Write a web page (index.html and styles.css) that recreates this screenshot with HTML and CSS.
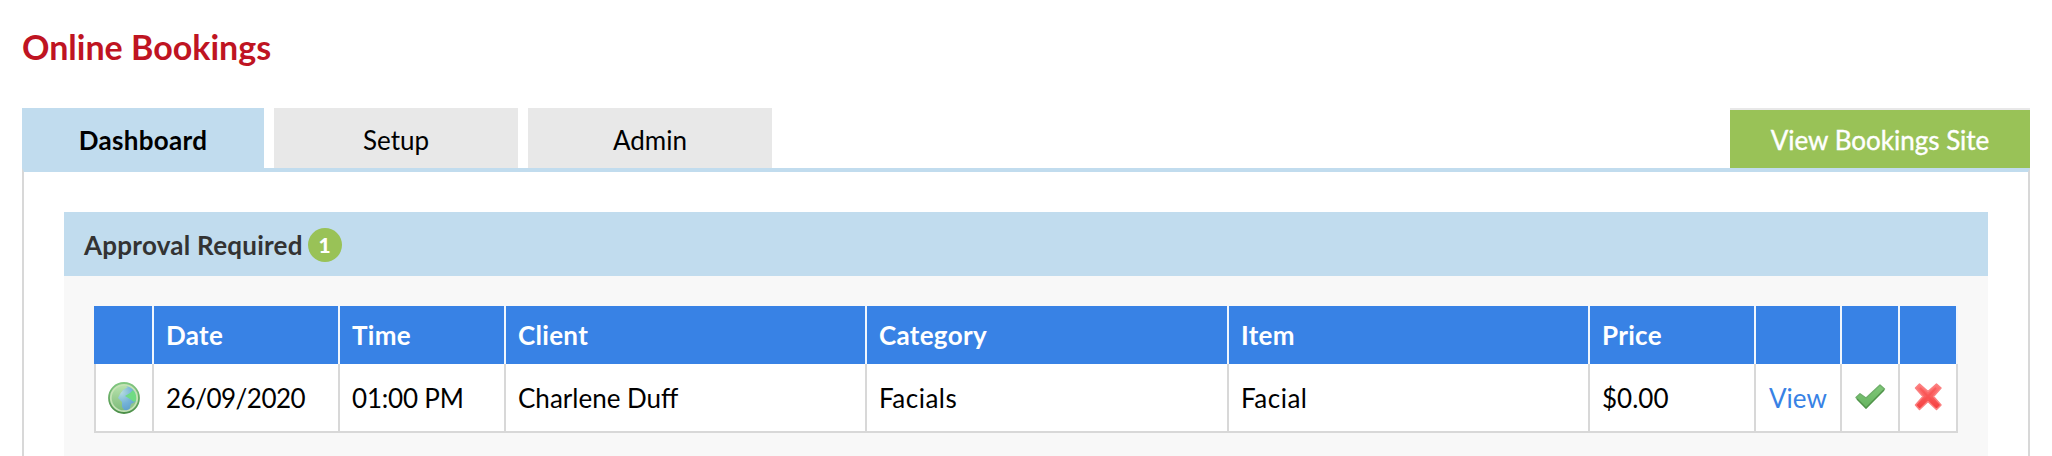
FILE: index.html
```html
<!DOCTYPE html>
<html lang="en">
<head>
  <meta charset="UTF-8">
  <title>Online Bookings</title>
  <link rel="stylesheet" href="styles.css">
</head>
<body>

  <h1>Online Bookings</h1>

  <!-- Tabs -->
  <nav class="tabs">
    <a href="#" class="tab active">Dashboard</a>
    <a href="#" class="tab">Setup</a>
    <a href="#" class="tab">Admin</a>
    <a href="#" class="site-button">View Bookings Site</a>
  </nav>

  <div class="panel">
    <section class="section">
      <h2>Approval Required <span class="badge">1</span></h2>

      <!-- Bookings waiting for approval -->
      <table>
        <colgroup>
          <col class="col-source">
          <col class="col-date">
          <col class="col-time">
          <col class="col-client">
          <col class="col-category">
          <col class="col-item">
          <col class="col-price">
          <col class="col-view">
          <col class="col-icon">
          <col class="col-icon">
        </colgroup>
        <thead>
          <tr>
            <th></th><th>Date</th><th>Time</th><th>Client</th><th>Category</th><th>Item</th><th>Price</th><th></th><th></th><th></th>
          </tr>
        </thead>
        <tbody>
          <tr>
            <td class="icon">
              <svg width="32" height="32" viewBox="0 0 32 32">
                <defs>
                  <radialGradient id="sea" cx="0.4" cy="0.3" r="0.75">
                    <stop offset="0" stop-color="#b5dcdf"/>
                    <stop offset="0.55" stop-color="#74b2d8"/>
                    <stop offset="1" stop-color="#5a9cc8"/>
                  </radialGradient>
                  <linearGradient id="land" x1="0" y1="0" x2="0" y2="1">
                    <stop offset="0" stop-color="#b8e3ae"/>
                    <stop offset="1" stop-color="#7dba78"/>
                  </linearGradient>
                  <linearGradient id="rim" x1="0" y1="0" x2="0" y2="1">
                    <stop offset="0" stop-color="#82c880"/>
                    <stop offset="1" stop-color="#4c8f48"/>
                  </linearGradient>
                </defs>
                <circle cx="16" cy="16" r="14" fill="url(#sea)"/>
                <path d="M4 11 Q7 3 16 3 L20 5 L15 8 L12 12 L10 16 L14 20 L14 25 L17 29 Q5 28 3 17 Z" fill="url(#land)"/>
                <path d="M17 14 L22 11 L25 8 L29 13 L29 18 L26 20 L22 17 Z" fill="#6fdb83"/>
                <path d="M23 22 L29 19 Q27 26 21 29 Z" fill="#8fc58b"/>
                <circle cx="16" cy="16" r="13.3" fill="none" stroke="#c5e3b4" stroke-width="2"/>
                <circle cx="16" cy="16" r="15" fill="none" stroke="url(#rim)" stroke-width="1.8"/>
              </svg>
            </td>
            <td class="date">26/09/2020</td>
            <td class="time">01:00 PM</td>
            <td>Charlene Duff</td>
            <td class="service">Facials</td>
            <td class="service">Facial</td>
            <td>$0.00</td>
            <td class="view"><a href="#">View</a></td>
            <td class="icon action">
              <svg width="32" height="32" viewBox="0 0 32 32">
                <defs>
                  <linearGradient id="tick" x1="0" y1="0" x2="0" y2="1">
                    <stop offset="0" stop-color="#80c878"/>
                    <stop offset="1" stop-color="#66b460"/>
                  </linearGradient>
                </defs>
                <path d="M2 16.5 L6 12.8 L12 17 L26 4 L30.5 8 L12 27 Z" fill="url(#tick)" stroke="#6fae6a" stroke-width="1.4" stroke-linejoin="round"/>
                <path d="M3 18 L12 27 L30 9" fill="none" stroke="#4f9449" stroke-width="1.4" stroke-linejoin="round"/>
              </svg>
            </td>
            <td class="icon action">
              <svg width="32" height="32" viewBox="0 0 32 32">
                <defs>
                  <linearGradient id="cross" x1="0" y1="0" x2="0" y2="1">
                    <stop offset="0" stop-color="#ff7d7d"/>
                    <stop offset="1" stop-color="#f43c3c"/>
                  </linearGradient>
                </defs>
                <path d="M7.5 3 L16 10.5 L24.5 3 L29 7 L21.5 15.5 L29 24 L24.5 28.5 L16 20.5 L7.5 28.5 L3.5 24 L11 15.5 L3.5 7 Z" fill="url(#cross)" stroke="#fb8080" stroke-width="1.5" stroke-linejoin="round"/>
                <path d="M8 7 L16 15.5 L24 24 M24 7 L8 24" fill="none" stroke="#f84a4a" stroke-width="2" opacity="0.5"/>
              </svg>
            </td>
          </tr>
        </tbody>
      </table>
    </section>
  </div>

</body>
</html>
```
FILE: styles.css
```css
* {
  box-sizing: border-box;
}

body {
  font-family: Lato, "Open Sans", sans-serif;
  font-size: 26px;
  line-height: 32px;
  margin: 0;
  padding: 23px 22px 0;
  background-color: white;
  color: black;
}

h1 {
  margin: 0 0 37px;
  font-size: 34px;
  line-height: 48px;
  color: #bf1422;
}

/* Tabs */
.tabs {
  display: flex;
  gap: 10px;
  height: 60px;
}

.tabs a {
  height: 60px;
  text-align: center;
  text-decoration: none;
  line-height: 64px;
}

.tab {
  width: 244px;
  background-color: #e8e8e8;
  color: black;
}

.tab.active {
  width: 242px;
  background-color: #c1dcee;
  font-weight: bold;
  letter-spacing: 0.3px;
}

.site-button {
  width: 300px;
  margin-left: auto;
  border-top: 2px solid #e8e8e8;
  background-color: #99c257;
  color: white;
  -webkit-text-stroke: 0.4px white;
}

.tabs .site-button {
  line-height: 60px;
}

.panel {
  height: 288px;
  padding: 40px 40px 0;
  border: 2px solid #d8d8d8;
  border-top: 4px solid #c1dcee;
  border-bottom: none;
}

.section {
  height: 244px;
  background-color: #f8f8f8;
}

h2 {
  display: flex;
  align-items: center;
  gap: 5px;
  height: 64px;
  margin: 0;
  padding: 2px 20px 0;
  font-size: 26px;
  letter-spacing: 0.25px;
  background-color: #c1dcee;
  color: #333;
}

.badge {
  width: 34px;
  height: 34px;
  border-radius: 50%;
  background-color: #99c257;
  color: white;
  font-size: 21px;
  font-weight: 900;
  line-height: 34px;
  text-align: center;
}

/* Bookings table */
table {
  width: 1864px;
  margin: 30px 30px 0;
  table-layout: fixed;
  border-collapse: separate;
  border-spacing: 0;
}

.col-source { width: 60px; }
.col-date { width: 186px; }
.col-time { width: 166px; }
.col-client { width: 361px; }
.col-category { width: 362px; }
.col-item { width: 361px; }
.col-price { width: 166px; }
.col-view { width: 86px; }
.col-icon { width: 58px; }

th, td {
  padding: 0 12px;
  text-align: left;
  white-space: nowrap;
}

th {
  height: 58px;
  background-color: #3882e5;
  border-right: 2px solid #f0f6fd;
  color: white;
  letter-spacing: 0.3px;
}

td {
  height: 69px;
  background-color: white;
  border-right: 2px solid #d8d8d8;
  border-bottom: 2px solid #d8d8d8;
}

td:first-child {
  border-left: 2px solid #d8d8d8;
}

td a {
  color: #3882e5;
  text-decoration: none;
}

.date {
  letter-spacing: -0.5px;
}

.time {
  letter-spacing: -0.2px;
}

.service {
  letter-spacing: 0.5px;
}

.view {
  padding: 0 0 0 13px;
}

.icon {
  padding: 0;
  text-align: center;
}

.icon svg {
  display: block;
  margin: 0 auto;
}

.action svg {
  position: relative;
  top: -1px;
}
```
